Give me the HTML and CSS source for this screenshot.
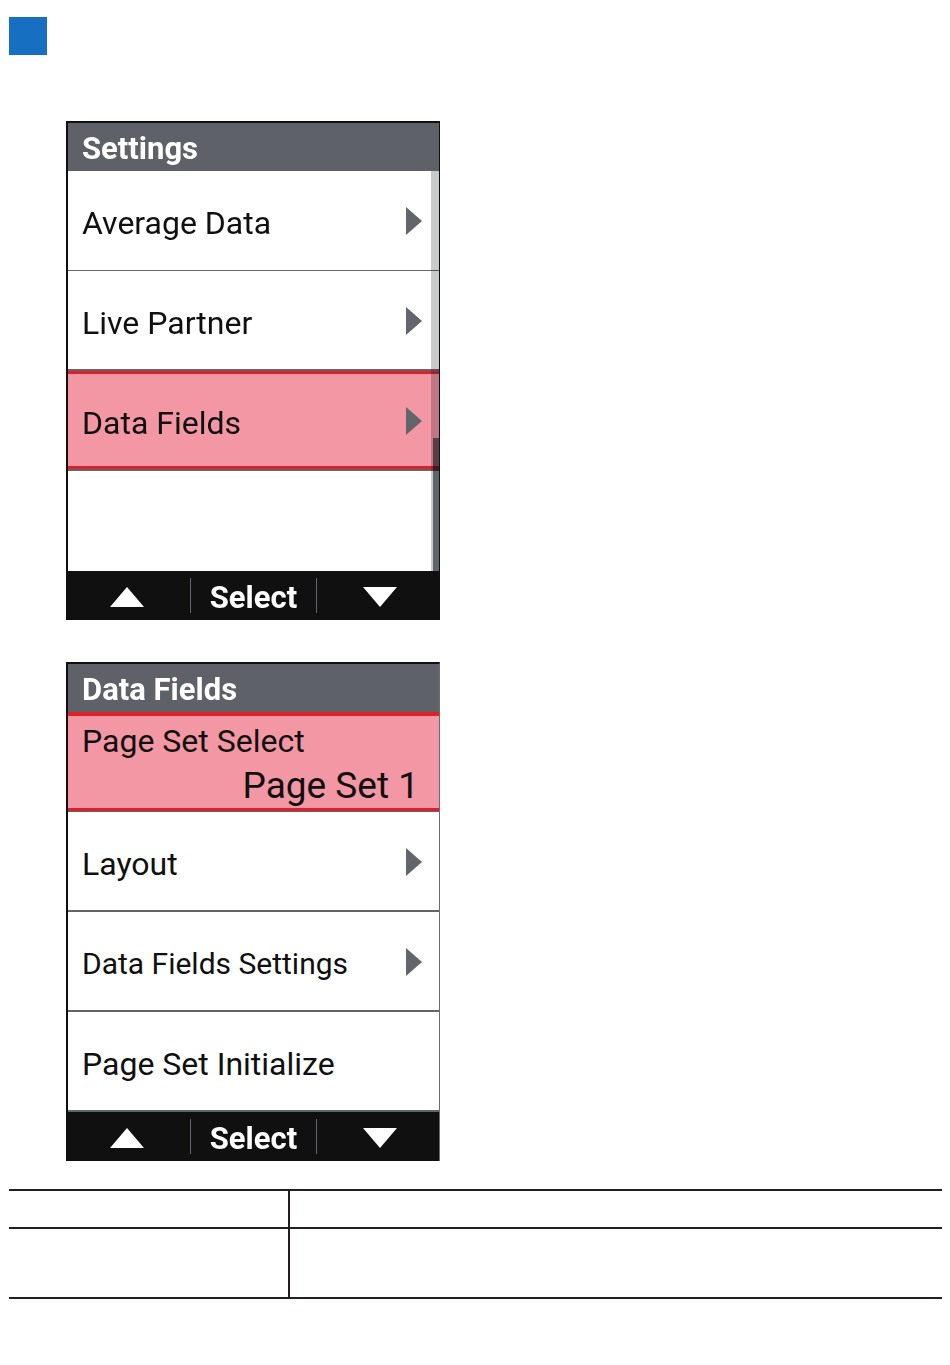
FILE: index.html
```html
<!doctype html>
<html lang="en">
    <head>
        <meta charset="utf-8" />
        <title>Data Fields</title>
        <link rel="stylesheet" href="styles.css">
    </head>
    <body>
        <div class="marker"></div>

        <div class="screens">
            <section class="device">
                <h2 class="device-title">Settings</h2>
                <div class="menu">
                    <button type="button" class="item thin">
                        <span class="label">Average Data</span>
                        <svg class="arrow" viewBox="0 0 16 28"><path d="M0 0L16 14L0 28Z" /></svg>
                    </button>
                    <button type="button" class="item">
                        <span class="label">Live Partner</span>
                        <svg class="arrow" viewBox="0 0 16 28"><path d="M0 0L16 14L0 28Z" /></svg>
                    </button>
                    <button type="button" class="item selected">
                        <span class="label">Data Fields</span>
                        <svg class="arrow" viewBox="0 0 16 28"><path d="M0 0L16 14L0 28Z" /></svg>
                    </button>
                    <div class="item empty"></div>
                    <div class="scrollbar"><div class="thumb"></div></div>
                </div>
                <div class="keys">
                    <button type="button" class="key up" aria-label="Up">
                        <svg class="key-icon" viewBox="0 0 34 20"><path d="M17 0L34 20H0Z" /></svg>
                    </button>
                    <button type="button" class="key middle">Select</button>
                    <button type="button" class="key down" aria-label="Down">
                        <svg class="key-icon" viewBox="0 0 34 20"><path d="M0 0H34L17 20Z" /></svg>
                    </button>
                </div>
            </section>

            <section class="device grey-edge">
                <h2 class="device-title">Data Fields</h2>
                <div class="menu">
                    <button type="button" class="item selected thin stacked">
                        <span class="label">Page Set Select</span>
                        <span class="value">Page Set 1</span>
                    </button>
                    <button type="button" class="item">
                        <span class="label">Layout</span>
                        <svg class="arrow" viewBox="0 0 16 28"><path d="M0 0L16 14L0 28Z" /></svg>
                    </button>
                    <button type="button" class="item long">
                        <span class="label">Data Fields Settings</span>
                        <svg class="arrow" viewBox="0 0 16 28"><path d="M0 0L16 14L0 28Z" /></svg>
                    </button>
                    <button type="button" class="item">
                        <span class="label">Page Set Initialize</span>
                    </button>
                </div>
                <div class="keys">
                    <button type="button" class="key up" aria-label="Up">
                        <svg class="key-icon" viewBox="0 0 34 20"><path d="M17 0L34 20H0Z" /></svg>
                    </button>
                    <button type="button" class="key middle">Select</button>
                    <button type="button" class="key down" aria-label="Down">
                        <svg class="key-icon" viewBox="0 0 34 20"><path d="M0 0H34L17 20Z" /></svg>
                    </button>
                </div>
            </section>
        </div>

        <table class="fields">
            <tr class="head-row">
                <th></th>
                <th></th>
            </tr>
            <tr class="body-row">
                <td></td>
                <td></td>
            </tr>
        </table>
    </body>
</html>
```

FILE: styles.css
```css
* {
    box-sizing: border-box;
}
body {
    margin: 0;
    padding: 17px 8px 66px 9px;
    background: white;
    font-family: Roboto, "Liberation Sans", sans-serif;
}
.marker {
    width: 38px;
    height: 38px;
    background: #176fc1;
}
.screens {
    display: flex;
    flex-direction: column;
    gap: 42px;
    padding: 66px 57px 28px;
}
.device {
    width: 100%;
    max-width: 374px;
    border: solid #101010;
    border-width: 2px 1px 0 2px;
}
.grey-edge {
    border-right-color: #696c72;
}
.device-title {
    margin: 0;
    padding: 4px 14px 0;
    background: #5f6168;
    color: white;
    font-size: 31px;
    font-weight: 700;
    line-height: 44px;
}

/* menu rows */
.menu {
    position: relative;
}
.item {
    display: flex;
    align-items: center;
    justify-content: space-between;
    width: 100%;
    height: 100px;
    padding: 1px 17px 0 14px;
    border: 0;
    border-bottom: 2px solid #63656c;
    background: white;
    color: #101010;
    font-family: inherit;
    font-size: 32px;
    line-height: 40px;
    text-align: left;
}
.label {
    padding-top: 4px;
}
.thin {
    border-bottom-width: 1px;
}
.long {
    font-size: 30px;
}
.empty {
    border-bottom: 0;
}
.selected {
    background: #f397a5;
    box-shadow: inset 0 3px #df2029, inset 0 -3px #df2029;
}
.stacked {
    flex-direction: column;
    align-items: stretch;
    justify-content: center;
    padding-top: 4px;
    padding-right: 20px;
    box-shadow: inset 0 4px #df2029, inset 0 -3px #df2029;
}
.value {
    font-size: 37px;
    line-height: 50px;
    text-align: right;
}
.arrow {
    width: 16px;
    height: 28px;
    fill: #63656c;
}

/* lies over the rows, so the highlight shows through it */
.scrollbar {
    position: absolute;
    top: 0;
    right: 0;
    bottom: 0;
    display: flex;
    flex-direction: column;
    justify-content: flex-end;
    width: 8px;
    padding-left: 2px;
    background: #c9cbca;
    mix-blend-mode: multiply;
}
.thumb {
    height: 133px;
    background: #63656c;
}

/* bottom keys */
.keys {
    display: grid;
    grid-template-columns: 1fr 127px 1fr;
    padding: 7px 0;
    background: #101010;
}
.key {
    display: flex;
    align-items: center;
    justify-content: center;
    height: 35px;
    padding: 2px 0 0;
    border: 0;
    background: none;
    color: white;
    font-family: inherit;
    font-size: 31px;
    font-weight: 700;
    line-height: 32px;
}
.up {
    padding-right: 4px;
}
.down {
    padding-left: 4px;
}
.middle {
    padding-top: 5px;
    border: solid #63656c;
    border-width: 0 1px;
}
.key-icon {
    width: 34px;
    height: 20px;
    fill: white;
}

.fields {
    width: 100%;
    table-layout: fixed;
    border-collapse: collapse;
}
.fields tr {
    border: solid #231f20;
    border-width: 2px 0;
}
.fields th,
.fields td {
    padding: 0;
}
.fields th:first-child,
.fields td:first-child {
    width: 30%;
    border-right: 2px solid #231f20;
}
.head-row {
    height: 38px;
}
.body-row {
    height: 70px;
}
```
